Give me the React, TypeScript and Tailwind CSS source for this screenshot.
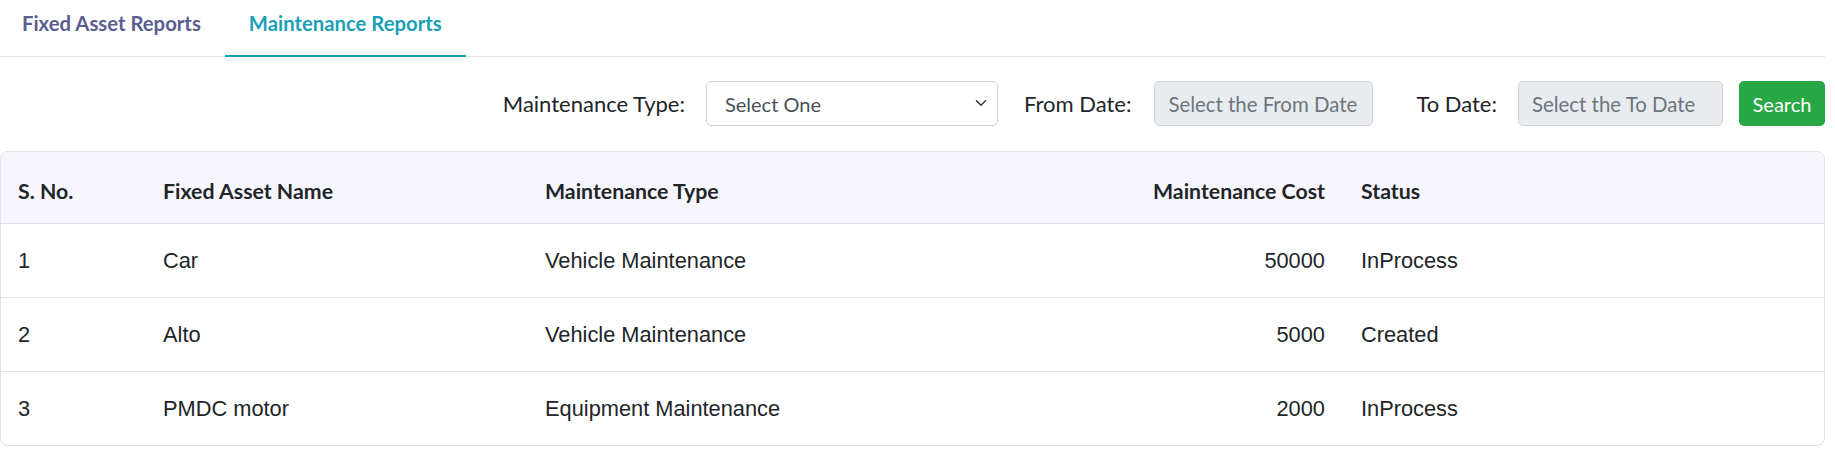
import { useState } from "react";

interface MaintenanceRow {
  id: number;
  assetName: string;
  maintenanceType: string;
  cost: number;
  status: string;
}

const rows: MaintenanceRow[] = [
  { id: 1, assetName: "Car", maintenanceType: "Vehicle Maintenance", cost: 50000, status: "InProcess" },
  { id: 2, assetName: "Alto", maintenanceType: "Vehicle Maintenance", cost: 5000, status: "Created" },
  { id: 3, assetName: "PMDC motor", maintenanceType: "Equipment Maintenance", cost: 2000, status: "InProcess" },
];

const tabs = ["Fixed Asset Reports", "Maintenance Reports"];

const gridCols = "grid grid-cols-[145px_381px_1fr_217px_481px]";

const App = () => {
  const [activeTab, setActiveTab] = useState(1);
  const [maintenanceType, setMaintenanceType] = useState("");

  return (
    <div className="w-[1825px] bg-white font-['Lato',sans-serif] text-[#212529]">
      {/* tabs */}
      <div className="flex border-b border-[#dee2e6]">
        {tabs.map((tab, i) => (
          <button
            key={tab}
            onClick={() => setActiveTab(i)}
            className={
              i === activeTab
                ? "-mb-px px-[24px] pt-[11px] pb-[20px] text-[20.3px] leading-[24px] font-bold text-[#1a9fb6] border-b-2 border-[#17a2b8]"
                : "-mb-px pl-[22px] pr-[24px] pt-[11px] pb-[20px] text-[20.3px] leading-[24px] font-bold text-[#5a5e8f] border-b-2 border-transparent"
            }
          >
            {tab}
          </button>
        ))}
      </div>

      {/* filters */}
      <div className="mt-[24px] flex items-center justify-end text-[22px]">
        <label className="mr-[21px]">Maintenance Type:</label>
        <div className="relative w-[292px] h-[45px]">
          <select
            value={maintenanceType}
            onChange={(e) => setMaintenanceType(e.target.value)}
            className="appearance-none w-full h-full rounded-[5px] border border-[#ced4da] bg-white pl-[18px] pr-[36px] text-[20px] text-[#495057] outline-none"
          >
            <option value="">Select One</option>
            <option value="vehicle">Vehicle Maintenance</option>
            <option value="equipment">Equipment Maintenance</option>
          </select>
          <svg
            className="pointer-events-none absolute right-[9px] top-[16px]"
            width="16"
            height="12"
            viewBox="0 0 16 16"
            fill="none"
            stroke="#343a40"
            strokeWidth="2"
            strokeLinecap="round"
            strokeLinejoin="round"
          >
            <path d="M2 5l6 6 6-6" />
          </svg>
        </div>
        <label className="ml-[26px] mr-[23px]">From Date:</label>
        <input
          readOnly
          placeholder="Select the From Date"
          className="w-[219px] h-[45px] rounded-[5px] border border-[#ced4da] bg-[#e9ecef] px-[13px] text-[20.4px] placeholder:text-[#6c757d] outline-none"
        />
        <label className="ml-[43px] mr-[21px]">To Date:</label>
        <input
          readOnly
          placeholder="Select the To Date"
          className="w-[205px] h-[45px] rounded-[5px] border border-[#ced4da] bg-[#e9ecef] px-[13px] text-[20.4px] placeholder:text-[#6c757d] outline-none"
        />
        <button className="ml-[16px] w-[86px] h-[45px] rounded-[5px] bg-[#28a745] text-white text-[20px]">
          Search
        </button>
      </div>

      {/* report table */}
      <div className="mt-[25px] rounded-[8px] border border-[#dee2e6] overflow-hidden">
        <div className={`${gridCols} h-[72px] items-center bg-[#f7f6fd] border-b border-[#dee2e6] text-[21.3px] font-bold pt-[8px]`}>
          <div className="px-[17px]">S. No.</div>
          <div className="px-[17px]">Fixed Asset Name</div>
          <div className="px-[18px]">Maintenance Type</div>
          <div className="px-[18px] text-right">Maintenance Cost</div>
          <div className="px-[18px]">Status</div>
        </div>
        {rows.map((row, i) => (
          <div
            key={row.id}
            className={`${gridCols} items-center pt-[2px] font-['Liberation_Sans',Arial,sans-serif] text-[21.8px] ${
              i < rows.length - 1 ? "h-[74px] border-b border-[#dee2e6]" : "h-[73px]"
            }`}
          >
            <div className="px-[17px]">{row.id}</div>
            <div className="px-[17px]">{row.assetName}</div>
            <div className="px-[18px]">{row.maintenanceType}</div>
            <div className="px-[18px] text-right">{row.cost}</div>
            <div className="px-[18px]">{row.status}</div>
          </div>
        ))}
      </div>
    </div>
  );
};

export default App;
